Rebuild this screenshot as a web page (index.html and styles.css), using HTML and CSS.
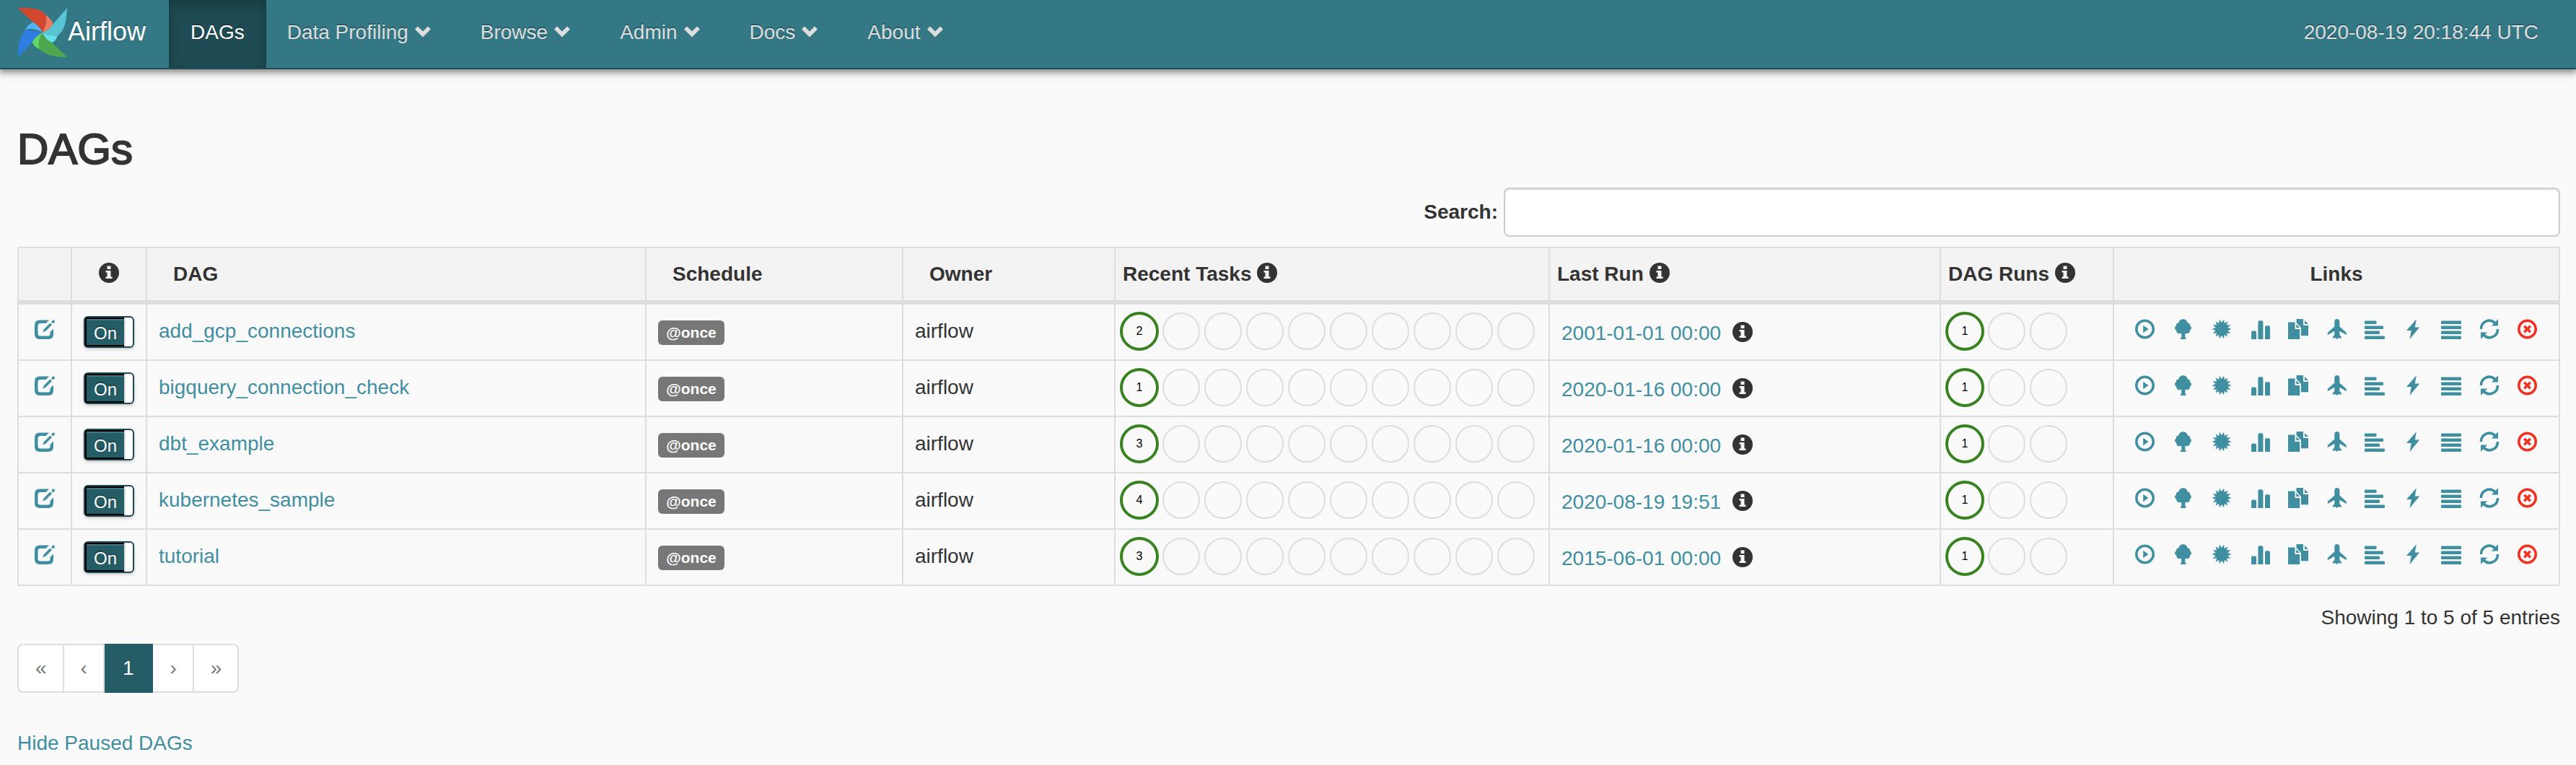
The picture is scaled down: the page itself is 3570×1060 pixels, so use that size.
FILE: index.html
```html
<!DOCTYPE html>
<html lang="en">
<head>
<meta charset="utf-8">
<meta name="viewport" content="width=device-width, initial-scale=1">
<title>Airflow - DAGs</title>
<link rel="stylesheet" href="styles.css">
</head>
<body>
<svg class="sprite" aria-hidden="true">
  <symbol id="caret" viewBox="0 0 28 28"><path d="M3 10.5L7 6.500L14 13.500L21 6.500L25 10.500L14 21.500Z"/></symbol>
  <symbol id="info" viewBox="0 0 28 28"><path fill-rule="evenodd" d="M14 0a14 14 0 1 0 0 28a14 14 0 1 0 0-28zM11.500 4.500h5v4.500h-5zM9.500 11h7v8.500h2v2.500h-9v-2.500h2v-6h-2z"/></symbol>
  <symbol id="edit" viewBox="0 0 28 28"><path d="M20 1.500H7Q0 1.500 0 8.500V21Q0 28 7 28H19Q26 28 26 21V13.500L21.500 18V20.500Q21.500 23.500 18.500 23.500H8Q4.500 23.500 4.500 20V9.500Q4.500 6 8 6H15.500Z"/><path d="M21.500 5.500L24 8L15.500 16.500L11 18.500L13 14ZM23 4L26 1L28.500 3.500L25.500 6.500Z"/></symbol>
  <symbol id="play" viewBox="0 0 28 28"><path fill-rule="evenodd" d="M13.500.5a13.500 13.500 0 1 0 0 27a13.500 13.500 0 1 0 0-27zM13.500 4a10 10 0 1 1 0 20a10 10 0 1 1 0-20z"/><path d="M11.200 8.700L18.500 14L11.200 19.300Z"/></symbol>
  <symbol id="tree" viewBox="0 0 28 28"><path d="M13.500.3C17 .3 19.300 2.500 19.500 5.500C22 5 23.500 7 23 9.500C25.500 10.500 25.500 14.500 23 15.500C23.500 18.500 20.500 21 17.500 20C16.500 19.500 16.300 20 16.300 21V25.800H17.500V28H10V25.800H11.200V21C11.200 20 10.500 19.500 9.500 20C6.500 21 3.800 18.500 4.200 15.500C1.500 14.500 1.300 10.500 4 9.500C3.500 7 5 5 7.500 5.500C7.800 2.500 10 .3 13.500.3Z"/></symbol>
  <symbol id="sun" viewBox="0 0 28 28"><path d="M27.500 14L22.500 16L26.200 19.900L20.900 19.600L22.400 24.600L17.900 22L17 27.200L14 23L11 27.200L10.100 22L5.600 24.600L7.100 19.600L1.800 19.900L5.500 16L.5 14L5.500 12L1.800 8.100L7.100 8.400L5.600 3.400L10.100 6L11 .8L14 5L17 .8L17.900 6L22.400 3.400L20.900 8.400L26.200 8.100L22.500 12Z"/></symbol>
  <symbol id="chart" viewBox="0 0 28 28"><path d="M2 28V18.500Q2 16.500 4 16.500H7Q9 16.500 9 18.500V28ZM11.400 28V4.500Q11.400 2.300 13.600 2.300H16.200Q18.400 2.300 18.400 4.500V28ZM21 28V11.300Q21 9.300 23 9.300H26Q28 9.300 28 11.300V28Z"/></symbol>
  <symbol id="copy" viewBox="0 0 28 28"><path d="M0 4.500H9.500V14H16.200V28H0ZM11.300 7L16.200 12H11.300ZM11.500 0H21V9H28V23.200H18V12L11.500 5ZM23 2L28 7H23Z"/></symbol>
  <symbol id="plane" viewBox="0 0 28 28"><path d="M14.800 0C17 0 18.400 1.500 18.400 4V10.500L27.300 18.500Q28.300 20 27.700 22L18.400 16.800V22L20.800 24.500V27L17.500 26L14.800 27.800L12 26L9 27V24.500L11.300 22V16.800L2 22Q1.300 20 2.300 18.500L11.300 10.500V4C11.300 1.500 12.600 0 14.800 0Z"/></symbol>
  <symbol id="align-left" viewBox="0 0 28 28"><rect x="0" y="2.500" width="16.500" height="4.500" rx="1"/><rect x="0" y="9.500" width="26" height="4.500" rx="1"/><rect x="0" y="16.500" width="21" height="4.500" rx="1"/><rect x="0" y="23.500" width="28" height="4.500" rx="1"/></symbol>
  <symbol id="flash" viewBox="0 0 28 28"><path d="M18.800.3L16.800 11.500H23.200L9.500 28L11.800 16H5Z"/></symbol>
  <symbol id="list" viewBox="0 0 28 28"><rect x="0" y="2.500" width="28" height="4.500" rx="1"/><rect x="0" y="9.500" width="28" height="4.500" rx="1"/><rect x="0" y="16.500" width="28" height="4.500" rx="1"/><rect x="0" y="23.500" width="28" height="4.500" rx="1"/></symbol>
  <symbol id="refresh" viewBox="0 0 28 28"><path d="M.8 14A13 13 0 0 1 22.500 3.800L26 .3V9.500H16.800L20 6.500A9.500 9.500 0 0 0 4.300 14Z"/><path d="M27.200 14A13 13 0 0 1 5.500 24.200L2 27.700V18.500H11.200L8 21.500A9.500 9.500 0 0 0 23.700 14Z"/></symbol>
  <symbol id="remove" viewBox="0 0 28 28"><path fill-rule="evenodd" d="M13.500.5a13.500 13.500 0 1 0 0 27a13.500 13.500 0 1 0 0-27zM13.500 4a10 10 0 1 1 0 20a10 10 0 1 1 0-20z"/><path d="M10.500 8.500L13.500 11.500L16.500 8.500L19 11L16 14L19 17L16.500 19.500L13.500 16.500L10.500 19.500L8 17L11 14L8 11Z"/></symbol>
</svg>

<nav class="navbar">
  <a class="brand" href="#">
    <svg class="logo" viewBox="24 10 70 70" aria-hidden="true">
      <path fill="#2f7de1" d="M25.400 79C24 66 27 52 35 40.700L59 45C52 48 47 54 44.600 58Z"/>
      <path fill="#4fb3f6" d="M35 40.700C38 36 42 32 46 30.700C52 34 57 40 59 45C51 40 43 39 35 40.700Z"/>
      <path fill="#d4472f" d="M24.500 11C40 11 56 10 63.400 20.700C66 29 62 38 59 45C57 40 52 34 46 30.700Z"/>
      <path fill="#f07b5c" d="M63.400 20.700C68 24 72 28 73.600 33.300C70 40 64 43 59 45C63 37 66 29 63.400 20.700Z"/>
      <path fill="#58c5d3" d="M93 11C92 24 92 40 80 49.300C73 50 65 49 59 45C64 43 70 40 73.600 33.300Z"/>
      <path fill="#66e2ec" d="M80 49.300C78 54 76 58 72 59C66 57 61 51 59 45C65 49 73 50 80 49.300Z"/>
      <path fill="#4ea94e" d="M93 79C80 79 65 78 54.500 68C53 60 54 51 59 45C61 51 66 57 72 59Z"/>
      <path fill="#62d668" d="M54.500 68C50 66 46 63 44.600 58C47 54 52 48 59 45C54 51 53 60 54.500 68Z"/>
    </svg>
    <span>Airflow</span>
  </a>
  <a class="nav-item active" href="#">DAGs</a>
  <a class="nav-item menu" href="#">Data Profiling<svg class="icon"><use href="#caret"/></svg></a>
  <a class="nav-item menu" href="#">Browse<svg class="icon"><use href="#caret"/></svg></a>
  <a class="nav-item menu" href="#">Admin<svg class="icon"><use href="#caret"/></svg></a>
  <a class="nav-item menu" href="#">Docs<svg class="icon"><use href="#caret"/></svg></a>
  <a class="nav-item menu" href="#">About<svg class="icon"><use href="#caret"/></svg></a>
  <a class="clock" href="#">2020-08-19 20:18:44 UTC</a>
</nav>

<main class="container">
  <h2 class="title">DAGs</h2>
  <div class="search">
    <label for="dag-search">Search:</label>
    <input id="dag-search" type="text">
  </div>

  <table class="dags">
    <colgroup>
      <col class="col-edit"><col class="col-toggle"><col><col class="col-schedule"><col class="col-owner">
      <col class="col-tasks"><col class="col-last"><col class="col-runs"><col class="col-links">
    </colgroup>
    <thead>
      <tr>
        <th></th>
        <th class="center"><svg class="icon"><use href="#info"/></svg></th>
        <th class="sortable">DAG</th>
        <th class="sortable">Schedule</th>
        <th class="sortable">Owner</th>
        <th>Recent Tasks <svg class="icon"><use href="#info"/></svg></th>
        <th>Last Run <svg class="icon"><use href="#info"/></svg></th>
        <th>DAG Runs <svg class="icon"><use href="#info"/></svg></th>
        <th class="center">Links</th>
      </tr>
    </thead>
    <tbody>
      <tr>
        <td class="edit"><a href="#" aria-label="Edit"><svg class="icon"><use href="#edit"/></svg></a></td>
        <td class="pause"><label class="toggle"><input type="checkbox" checked><span>On</span></label></td>
        <td><a href="#">add_gcp_connections</a></td>
        <td class="schedule"><a class="badge" href="#">@once</a></td>
        <td>airflow</td>
        <td class="states"><div><b>2</b><i></i><i></i><i></i><i></i><i></i><i></i><i></i><i></i><i></i></div></td>
        <td class="last"><a href="#">2001-01-01 00:00</a><svg class="icon"><use href="#info"/></svg></td>
        <td class="states"><div><b>1</b><i></i><i></i></div></td>
        <td class="links"><div>
          <a href="#" aria-label="Trigger"><svg class="icon"><use href="#play"/></svg></a>
          <a href="#" aria-label="Tree view"><svg class="icon"><use href="#tree"/></svg></a>
          <a href="#" aria-label="Graph view"><svg class="icon"><use href="#sun"/></svg></a>
          <a href="#" aria-label="Duration"><svg class="icon"><use href="#chart"/></svg></a>
          <a href="#" aria-label="Tries"><svg class="icon"><use href="#copy"/></svg></a>
          <a href="#" aria-label="Landing times"><svg class="icon"><use href="#plane"/></svg></a>
          <a href="#" aria-label="Gantt"><svg class="icon"><use href="#align-left"/></svg></a>
          <a href="#" aria-label="Code"><svg class="icon"><use href="#flash"/></svg></a>
          <a href="#" aria-label="Logs"><svg class="icon"><use href="#list"/></svg></a>
          <a href="#" aria-label="Refresh"><svg class="icon"><use href="#refresh"/></svg></a>
          <a class="danger" href="#" aria-label="Delete"><svg class="icon"><use href="#remove"/></svg></a>
        </div></td>
      </tr>
      <tr>
        <td class="edit"><a href="#" aria-label="Edit"><svg class="icon"><use href="#edit"/></svg></a></td>
        <td class="pause"><label class="toggle"><input type="checkbox" checked><span>On</span></label></td>
        <td><a href="#">bigquery_connection_check</a></td>
        <td class="schedule"><a class="badge" href="#">@once</a></td>
        <td>airflow</td>
        <td class="states"><div><b>1</b><i></i><i></i><i></i><i></i><i></i><i></i><i></i><i></i><i></i></div></td>
        <td class="last"><a href="#">2020-01-16 00:00</a><svg class="icon"><use href="#info"/></svg></td>
        <td class="states"><div><b>1</b><i></i><i></i></div></td>
        <td class="links"><div>
          <a href="#" aria-label="Trigger"><svg class="icon"><use href="#play"/></svg></a>
          <a href="#" aria-label="Tree view"><svg class="icon"><use href="#tree"/></svg></a>
          <a href="#" aria-label="Graph view"><svg class="icon"><use href="#sun"/></svg></a>
          <a href="#" aria-label="Duration"><svg class="icon"><use href="#chart"/></svg></a>
          <a href="#" aria-label="Tries"><svg class="icon"><use href="#copy"/></svg></a>
          <a href="#" aria-label="Landing times"><svg class="icon"><use href="#plane"/></svg></a>
          <a href="#" aria-label="Gantt"><svg class="icon"><use href="#align-left"/></svg></a>
          <a href="#" aria-label="Code"><svg class="icon"><use href="#flash"/></svg></a>
          <a href="#" aria-label="Logs"><svg class="icon"><use href="#list"/></svg></a>
          <a href="#" aria-label="Refresh"><svg class="icon"><use href="#refresh"/></svg></a>
          <a class="danger" href="#" aria-label="Delete"><svg class="icon"><use href="#remove"/></svg></a>
        </div></td>
      </tr>
      <tr>
        <td class="edit"><a href="#" aria-label="Edit"><svg class="icon"><use href="#edit"/></svg></a></td>
        <td class="pause"><label class="toggle"><input type="checkbox" checked><span>On</span></label></td>
        <td><a href="#">dbt_example</a></td>
        <td class="schedule"><a class="badge" href="#">@once</a></td>
        <td>airflow</td>
        <td class="states"><div><b>3</b><i></i><i></i><i></i><i></i><i></i><i></i><i></i><i></i><i></i></div></td>
        <td class="last"><a href="#">2020-01-16 00:00</a><svg class="icon"><use href="#info"/></svg></td>
        <td class="states"><div><b>1</b><i></i><i></i></div></td>
        <td class="links"><div>
          <a href="#" aria-label="Trigger"><svg class="icon"><use href="#play"/></svg></a>
          <a href="#" aria-label="Tree view"><svg class="icon"><use href="#tree"/></svg></a>
          <a href="#" aria-label="Graph view"><svg class="icon"><use href="#sun"/></svg></a>
          <a href="#" aria-label="Duration"><svg class="icon"><use href="#chart"/></svg></a>
          <a href="#" aria-label="Tries"><svg class="icon"><use href="#copy"/></svg></a>
          <a href="#" aria-label="Landing times"><svg class="icon"><use href="#plane"/></svg></a>
          <a href="#" aria-label="Gantt"><svg class="icon"><use href="#align-left"/></svg></a>
          <a href="#" aria-label="Code"><svg class="icon"><use href="#flash"/></svg></a>
          <a href="#" aria-label="Logs"><svg class="icon"><use href="#list"/></svg></a>
          <a href="#" aria-label="Refresh"><svg class="icon"><use href="#refresh"/></svg></a>
          <a class="danger" href="#" aria-label="Delete"><svg class="icon"><use href="#remove"/></svg></a>
        </div></td>
      </tr>
      <tr>
        <td class="edit"><a href="#" aria-label="Edit"><svg class="icon"><use href="#edit"/></svg></a></td>
        <td class="pause"><label class="toggle"><input type="checkbox" checked><span>On</span></label></td>
        <td><a href="#">kubernetes_sample</a></td>
        <td class="schedule"><a class="badge" href="#">@once</a></td>
        <td>airflow</td>
        <td class="states"><div><b>4</b><i></i><i></i><i></i><i></i><i></i><i></i><i></i><i></i><i></i></div></td>
        <td class="last"><a href="#">2020-08-19 19:51</a><svg class="icon"><use href="#info"/></svg></td>
        <td class="states"><div><b>1</b><i></i><i></i></div></td>
        <td class="links"><div>
          <a href="#" aria-label="Trigger"><svg class="icon"><use href="#play"/></svg></a>
          <a href="#" aria-label="Tree view"><svg class="icon"><use href="#tree"/></svg></a>
          <a href="#" aria-label="Graph view"><svg class="icon"><use href="#sun"/></svg></a>
          <a href="#" aria-label="Duration"><svg class="icon"><use href="#chart"/></svg></a>
          <a href="#" aria-label="Tries"><svg class="icon"><use href="#copy"/></svg></a>
          <a href="#" aria-label="Landing times"><svg class="icon"><use href="#plane"/></svg></a>
          <a href="#" aria-label="Gantt"><svg class="icon"><use href="#align-left"/></svg></a>
          <a href="#" aria-label="Code"><svg class="icon"><use href="#flash"/></svg></a>
          <a href="#" aria-label="Logs"><svg class="icon"><use href="#list"/></svg></a>
          <a href="#" aria-label="Refresh"><svg class="icon"><use href="#refresh"/></svg></a>
          <a class="danger" href="#" aria-label="Delete"><svg class="icon"><use href="#remove"/></svg></a>
        </div></td>
      </tr>
      <tr>
        <td class="edit"><a href="#" aria-label="Edit"><svg class="icon"><use href="#edit"/></svg></a></td>
        <td class="pause"><label class="toggle"><input type="checkbox" checked><span>On</span></label></td>
        <td><a href="#">tutorial</a></td>
        <td class="schedule"><a class="badge" href="#">@once</a></td>
        <td>airflow</td>
        <td class="states"><div><b>3</b><i></i><i></i><i></i><i></i><i></i><i></i><i></i><i></i><i></i></div></td>
        <td class="last"><a href="#">2015-06-01 00:00</a><svg class="icon"><use href="#info"/></svg></td>
        <td class="states"><div><b>1</b><i></i><i></i></div></td>
        <td class="links"><div>
          <a href="#" aria-label="Trigger"><svg class="icon"><use href="#play"/></svg></a>
          <a href="#" aria-label="Tree view"><svg class="icon"><use href="#tree"/></svg></a>
          <a href="#" aria-label="Graph view"><svg class="icon"><use href="#sun"/></svg></a>
          <a href="#" aria-label="Duration"><svg class="icon"><use href="#chart"/></svg></a>
          <a href="#" aria-label="Tries"><svg class="icon"><use href="#copy"/></svg></a>
          <a href="#" aria-label="Landing times"><svg class="icon"><use href="#plane"/></svg></a>
          <a href="#" aria-label="Gantt"><svg class="icon"><use href="#align-left"/></svg></a>
          <a href="#" aria-label="Code"><svg class="icon"><use href="#flash"/></svg></a>
          <a href="#" aria-label="Logs"><svg class="icon"><use href="#list"/></svg></a>
          <a href="#" aria-label="Refresh"><svg class="icon"><use href="#refresh"/></svg></a>
          <a class="danger" href="#" aria-label="Delete"><svg class="icon"><use href="#remove"/></svg></a>
        </div></td>
      </tr>
    </tbody>
  </table>

  <p class="summary">Showing 1 to 5 of 5 entries</p>
  <ul class="pagination">
    <li><a href="#">«</a></li>
    <li><a href="#">‹</a></li>
    <li class="current"><a href="#">1</a></li>
    <li><a href="#">›</a></li>
    <li><a href="#">»</a></li>
  </ul>
  <a class="paused" href="#">Hide Paused DAGs</a>
</main>
</body>
</html>
```
FILE: styles.css
```css
* { box-sizing: border-box; }

body {
  margin: 0;
  background: #fafafa;
  color: #333;
  font: 28px/40px "Liberation Sans", Arial, sans-serif;
}

a { color: #3f8fa0; text-decoration: none; }

.sprite { position: absolute; width: 0; height: 0; }

.icon { width: 28px; height: 28px; fill: currentColor; overflow: visible; }

/* Navigation bar */
.navbar {
  display: flex;
  height: 96px;
  background: #337884;
  border-bottom: 2px solid #1f4c54;
  box-shadow: 0 2px 10px 2px rgba(0, 0, 0, .5);
  text-shadow: 0 -2px 0 rgba(0, 0, 0, .25);
}
.brand {
  display: flex;
  width: 234px;
  padding: 10px 0 0 24px;
  color: #fff;
  font-size: 36px;
}
.brand span { padding-top: 14px; }
.logo { width: 70px; height: 70px; }
.nav-item { display: flex; gap: 6px; padding: 25px 30px 29px; color: #ddd; }
.nav-item .icon { margin-top: 5px; }
.nav-item.menu { padding-right: 37px; padding-left: 29px; }
.nav-item.active {
  background: #1f4c54;
  box-shadow: inset 0 6px 18px rgba(0, 0, 0, .25);
  color: #fff;
}
.clock { margin-left: auto; padding: 25px 52px 29px; color: #ddd; }

/* Page content */
.container { padding: 78px 22px 8px 24px; }
.title {
  margin: 0 0 20px;
  font-size: 60px;
  font-weight: 500;
  line-height: 66px;
  -webkit-text-stroke: 2px #333;
}
.search {
  display: flex;
  justify-content: flex-end;
  align-items: center;
  gap: 8px;
  margin-bottom: 14px;
  font-weight: bold;
}
.search input {
  flex: 0 1 1464px;
  height: 68px;
  padding: 12px 24px;
  border: 2px solid #ccc;
  border-radius: 8px;
  background: #fff;
  box-shadow: inset 0 2px 2px rgba(0, 0, 0, .075);
  font: inherit;
}

/* DAG table */
.dags {
  width: 100%;
  table-layout: fixed;
  border-collapse: separate;
  border-spacing: 0;
  border: solid #ddd;
  border-width: 2px 0 0 2px;
}
.col-edit { width: 74px; }
.col-toggle { width: 104px; }
.col-schedule { width: 356px; }
.col-owner { width: 294px; }
.col-tasks { width: 602px; }
.col-last { width: 542px; }
.col-runs { width: 240px; }
.col-links { width: 618px; }
.dags th {
  height: 78px;
  padding: 16px 10px;
  border: solid #ddd;
  border-width: 0 2px 6px 0;
  background: #f3f3f3;
  text-align: left;
  line-height: 40px;
}
.dags th.sortable { padding-left: 36px; }
.dags th.center { text-align: center; }
.dags th .icon { display: inline-block; margin-top: 4px; vertical-align: top; }
.dags td {
  height: 78px;
  padding: 17px 16px 0;
  border: solid #ddd;
  border-width: 0 2px 2px 0;
  vertical-align: top;
}
.dags tbody tr:nth-child(odd) { background: #f9f9f9; }
.dags td.edit { padding: 20px 22px 0; }
.edit a, .links a { display: block; height: 28px; }
.edit .icon, .links .icon { display: block; }

.dags td.pause { padding-top: 16px; }
.toggle {
  display: flex;
  position: relative;
  width: 70px;
  height: 44px;
  border: 2px solid #1f4750;
  border-radius: 6px;
  background: #fff;
  box-shadow: 0 2px 4px rgba(0, 0, 0, .2);
}
.toggle input { position: absolute; inset: 0; margin: 0; opacity: 0; }
.toggle span {
  width: 54px;
  height: 40px;
  padding-left: 10px;
  border: solid #000;
  border-width: 2px 0 2px 2px;
  background: #255d66;
  box-shadow: inset 0 2px 0 #447580, 2px 0 0 #ddd;
  color: #fff;
  font-size: 24px;
  line-height: 40px;
  text-shadow: 0 -2px 2px rgba(0, 0, 0, .3);
}

.dags td.schedule { padding-top: 22px; }
.badge {
  display: block;
  width: 92px;
  height: 34px;
  border-radius: 6px;
  background: #777;
  color: #fff;
  font-size: 21px;
  font-weight: bold;
  line-height: 34px;
  text-align: center;
}

.dags td.states { padding: 10px 6px 0; }
.states div { display: flex; gap: 4px; }
.states b, .states i {
  width: 54px;
  height: 54px;
  border: 4px solid #38821f;
  border-radius: 50%;
  color: #000;
  font-size: 16px;
  font-weight: normal;
  line-height: 46px;
  text-align: center;
}
.states i { width: 52px; height: 52px; margin: 1px; border: 2px solid #ddd; }

.dags td.last { padding-top: 20px; }
.last .icon { display: inline-block; margin: 4px 0 0 16px; vertical-align: top; }

.dags td.links { padding: 20px 0 0; }
.links div { display: flex; justify-content: center; gap: 25px; }
.links .danger { color: #f03020; }

/* Footer of the table */
.summary { margin: 24px 0 16px; text-align: right; }
.pagination { display: flex; margin: 0 0 50px; padding: 0; list-style: none; }
.pagination a {
  display: block;
  height: 68px;
  padding: 12px 22px 12px 23px;
  border: solid #ddd;
  border-width: 2px 2px 2px 0;
  background: #fff;
  color: #777;
}
.pagination li:first-child a { border-left-width: 2px; border-radius: 8px 0 0 8px; }
.pagination li:last-child a { border-radius: 0 8px 8px 0; }
.pagination .current a { padding: 12px 25px; border-color: #255d66; background: #255d66; color: #fff; }
.paused { display: table; }
```
